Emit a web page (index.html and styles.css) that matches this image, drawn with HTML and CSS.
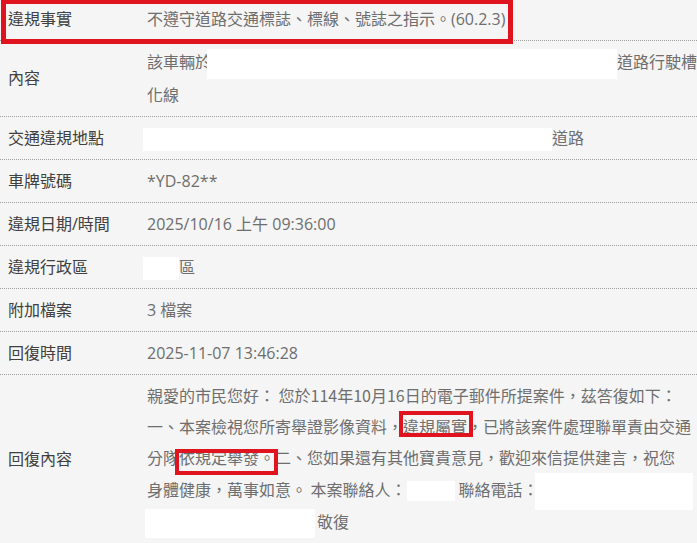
FILE: index.html
```html
<!DOCTYPE html>
<html lang="zh-Hant">
<head>
<meta charset="utf-8">
<title>檢舉案件回復</title>
<link rel="stylesheet" href="styles.css">
</head>
<body>
<div class="page">
  <div class="table">
    <div class="row">
      <div class="label">違規事實</div>
      <div class="value">不遵守道路交通標誌、標線、號誌之指示。(60.2.3)</div>
    </div>
    <div class="row">
      <div class="label">內容</div>
      <div class="value nowrap">該車輛於<span class="mask mask-road"></span>道路行駛槽<br>化線</div>
    </div>
    <div class="row">
      <div class="label">交通違規地點</div>
      <div class="value nowrap"><span class="mask mask-place"></span>道路</div>
    </div>
    <div class="row">
      <div class="label">車牌號碼</div>
      <div class="value">*YD-82**</div>
    </div>
    <div class="row">
      <div class="label">違規日期/時間</div>
      <div class="value">2025/10/16 上午 09:36:00</div>
    </div>
    <div class="row">
      <div class="label">違規行政區</div>
      <div class="value"><span class="mask mask-district"></span>區</div>
    </div>
    <div class="row">
      <div class="label">附加檔案</div>
      <div class="value">3 檔案</div>
    </div>
    <div class="row">
      <div class="label">回復時間</div>
      <div class="value">2025-11-07 13:46:28</div>
    </div>
    <div class="row last">
      <div class="label">回復內容</div>
      <div class="value reply nowrap">親愛的市民您好： 您於114年10月16日的電子郵件所提案件，茲答復如下：<br>一、本案檢視您所寄舉證影像資料，<span class="hl">違規屬實</span>，已將該案件處理聯單責由交通<br>分隊<span class="hl">依規定舉發。</span>二、您如果還有其他寶貴意見，歡迎來信提供建言，祝您<br>身體健康，萬事如意。 本案聯絡人：<span class="mask mask-contact"></span>聯絡電話：<span class="mask mask-phone"></span><br><span class="mask mask-sign"></span>敬復</div>
    </div>
  </div>
  <div class="mark mark-fact"></div>
  <div class="mark mark-true"></div>
  <div class="mark mark-report"></div>
</div>
</body>
</html>
```
FILE: styles.css
```css
html, body {
  margin: 0;
  padding: 0;
  background: #f5f5f5;
}

body {
  font-family: "Open Sans", "Noto Sans CJK TC", sans-serif;
  font-size: 16px;
  color: #6e6e6e;
  overflow: hidden;
}

.page {
  position: relative;
  width: 697px;
  height: 543px;
  overflow: hidden;
}

.table {
  margin-top: -2px;
}

.row {
  display: grid;
  grid-template-columns: 147px 1fr;
  align-items: center;
  border-bottom: 1px dotted #a0a0a0;
  padding: 5px 0;
  line-height: 32px;
}

.row.last {
  border-bottom: none;
}

.label {
  padding-left: 8px;
  color: #404040;
}

.value {
  padding-right: 5px;
}

.nowrap {
  white-space: nowrap;
}

.reply {
  font-family: "Noto Sans CJK TC", sans-serif;
  line-height: 31.3px;
}

.mask {
  display: inline-block;
  background: #ffffff;
  vertical-align: middle;
}

.mask-road {
  width: 410px;
  height: 30px;
  margin-left: -4px;
}

.mask-place {
  width: 409px;
  height: 23px;
  margin-left: -4px;
}

.mask-district {
  width: 36px;
  height: 23px;
  margin-left: -4px;
}

.mask-contact {
  width: 48px;
  height: 20px;
  margin: 0 4px 0 0;
}

.mask-phone {
  width: 158px;
  height: 37px;
  margin: -4px 0 -4px -4px;
}

.mask-sign {
  width: 170px;
  height: 29px;
  margin-left: -2px;
  margin-right: 2px;
}

.mark {
  position: absolute;
  border: 5px solid #e0141e;
  box-sizing: border-box;
}

.mark-fact {
  left: 1px;
  top: -1px;
  width: 512px;
  height: 45px;
}

.mark-true {
  left: 399px;
  top: 411px;
  width: 74px;
  height: 26px;
  border-width: 4px;
}

.mark-report {
  left: 175px;
  top: 449px;
  width: 103px;
  height: 26px;
  border-width: 4px;
}
```
